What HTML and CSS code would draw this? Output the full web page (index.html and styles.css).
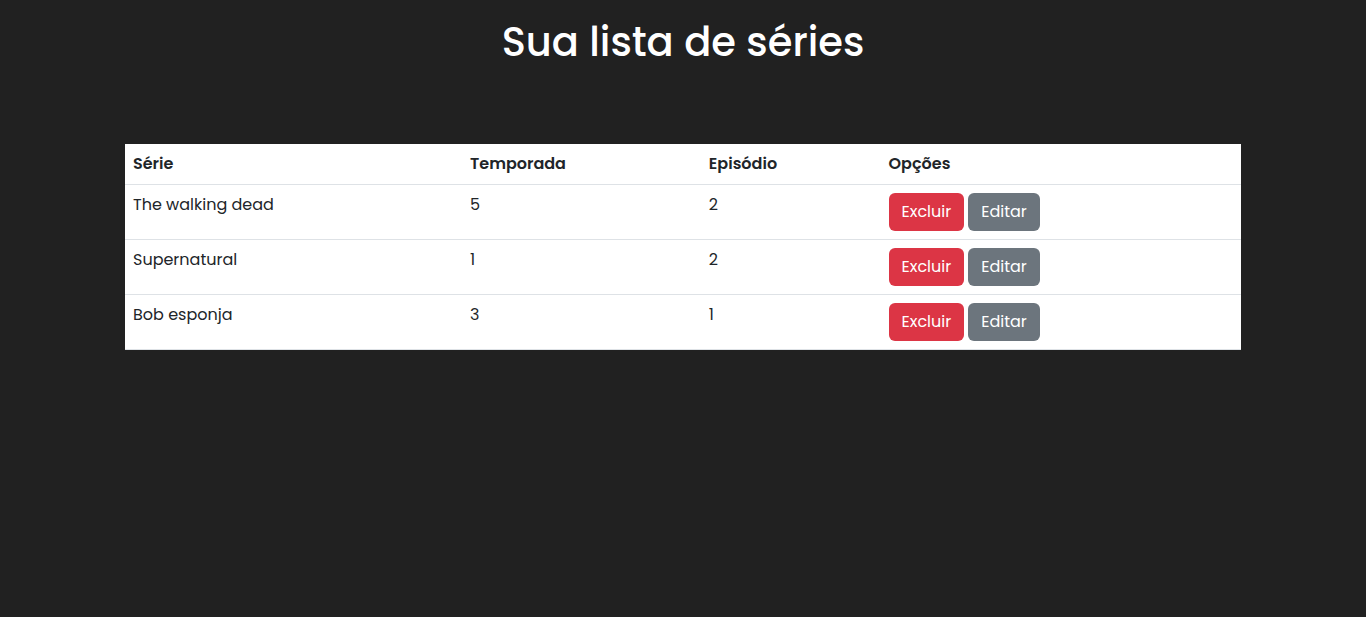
FILE: index.html
```html
<!DOCTYPE html>
<html lang="pt-BR">
<head>
<meta charset="utf-8">
<meta name="viewport" content="width=device-width, initial-scale=1">
<title>Sua lista de séries</title>
<link rel="stylesheet" href="styles.css">
</head>
<body>
<main class="page">
  <h1 class="title">Sua lista de séries</h1>
  <table class="series">
    <colgroup>
      <col class="col-name">
      <col class="col-season">
      <col class="col-episode">
      <col class="col-options">
    </colgroup>
    <thead>
      <tr><th scope="col">Série</th><th scope="col">Temporada</th><th scope="col">Episódio</th><th scope="col">Opções</th></tr>
    </thead>
    <tbody>
      <tr>
        <td>The walking dead</td><td>5</td><td>2</td>
        <td><div class="actions"><button type="button" class="btn btn-danger">Excluir</button><button type="button" class="btn btn-secondary">Editar</button></div></td>
      </tr>
      <tr>
        <td>Supernatural</td><td>1</td><td>2</td>
        <td><div class="actions"><button type="button" class="btn btn-danger">Excluir</button><button type="button" class="btn btn-secondary">Editar</button></div></td>
      </tr>
      <tr>
        <td>Bob esponja</td><td>3</td><td>1</td>
        <td><div class="actions"><button type="button" class="btn btn-danger">Excluir</button><button type="button" class="btn btn-secondary">Editar</button></div></td>
      </tr>
    </tbody>
  </table>
</main>
</body>
</html>
```
FILE: styles.css
```css
* {
  box-sizing: border-box;
}

body {
  margin: 0;
  background: #212121;
  color: #212529;
  font-family: Poppins, Inter, "Open Sans", sans-serif;
  font-size: 16px;
  line-height: 24px;
}

.page {
  max-width: 1140px;
  margin: 0 auto;
  padding: 18px 12px;
}

.title {
  margin: 0 0 78px;
  color: #fff;
  font-size: 40px;
  font-weight: 500;
  line-height: 48px;
  text-align: center;
}

.series {
  width: 100%;
  table-layout: fixed;
  border-collapse: collapse;
  background: #fff;
}

.col-name {
  width: 30.2%;
}

.col-season {
  width: 21.4%;
}

.col-episode {
  width: 16.1%;
}

.series th,
.series td {
  padding: 8px;
  border-bottom: 1px solid #dee2e6;
  text-align: left;
  vertical-align: top;
}

.series th {
  font-weight: 600;
}

.actions {
  display: flex;
  gap: 4px;
}

.btn {
  padding: 6px 12px;
  border: 1px solid transparent;
  border-radius: 6px;
  color: #fff;
  font: inherit;
  cursor: pointer;
}

.btn-danger {
  background: #dc3545;
}

.btn-secondary {
  background: #6c757d;
}
```
